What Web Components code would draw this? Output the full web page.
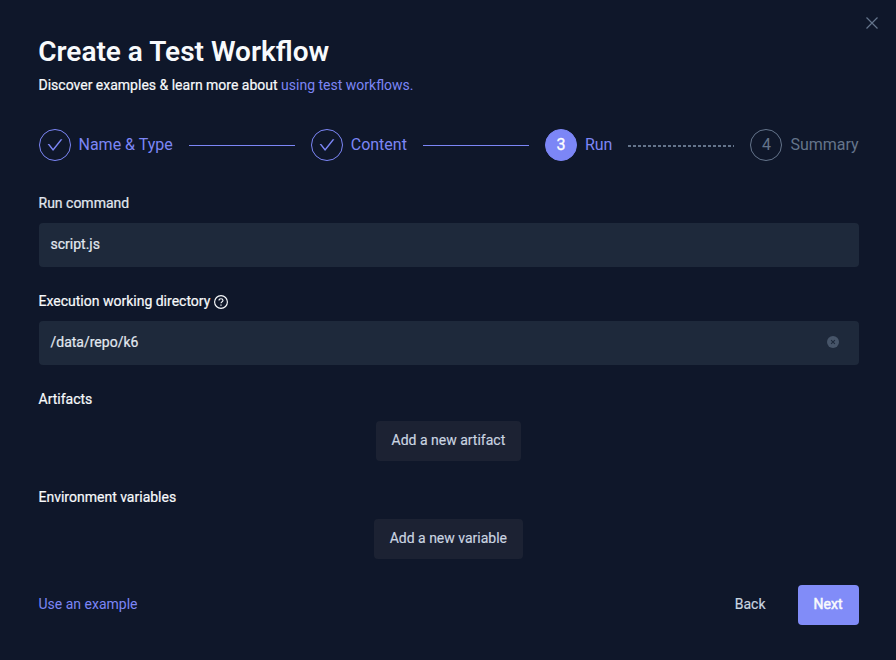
<!DOCTYPE html>
<html lang="en">
<head>
<meta charset="utf-8">
<title>Create a Test Workflow</title>
<style>
html,body{margin:0;height:100%;background:#0f172a;overflow:hidden}
body{font-family:Roboto,sans-serif;font-size:14px;line-height:22px;color:#f8fafc}
</style>
</head>
<body>
<workflow-dialog></workflow-dialog>
<script>
const define = (name, html, setup) => customElements.define(name, class extends HTMLElement {
  connectedCallback() {
    if (this.shadowRoot) return;
    const t = document.createElement('template');
    t.innerHTML = html;
    this.attachShadow({mode: 'open'}).append(t.content.cloneNode(true));
    if (setup) setup(this, this.shadowRoot);
  }
});

define('wizard-step', `
<style>
:host{display:flex;align-items:center;flex:none;font-size:16px;line-height:32px;color:#7c86f6}
.dot{box-sizing:border-box;width:32px;height:32px;border:1px solid #7c86f6;border-radius:50%;display:flex;align-items:center;justify-content:center;margin-right:8px;flex:none}
.dot svg{display:block;width:16px;height:16px;fill:#7c86f6}
:host([state=active]) .dot{background:#7c86f6;color:#fff;-webkit-text-stroke:.3px currentColor}
:host([state=wait]){color:#64748b}
:host([state=wait]) .dot{border-color:#64748b;padding-left:1px}
:host([state=wait]) .title{padding-left:.5px}
.title{white-space:nowrap}
.tail{width:106px;flex:none;height:1px;background:#7c86f6;margin:0 16px}
:host([state=active]) .tail{height:2px;margin:1px 15.5px 0 16px;background:repeating-linear-gradient(90deg,#64748b 0 3px,transparent 3px 5px)}
:host([last]) .tail{display:none}
</style>
<div class="dot"></div><div class="title"><slot></slot></div><div class="tail"></div>`, (el, root) => {
  root.querySelector('.dot').innerHTML = el.getAttribute('state') === 'done'
    ? '<svg viewBox="64 64 896 896"><path d="M912 190h-69.9c-9.8 0-19.1 4.5-25.1 12.2L404.7 724.5 207 474a32 32 0 00-25.1-12.2H112c-6.7 0-10.4 7.7-6.3 12.9l273.9 347c12.8 16.2 37.4 16.2 50.3 0l488.4-618.9c4.1-5.1.4-12.8-6.3-12.8z"/></svg>'
    : el.getAttribute('number');
});

define('form-field', `
<style>
:host{display:block;height:98px}
.label{display:flex;align-items:center;height:22px;margin-bottom:9px;-webkit-text-stroke:.2px currentColor;font-size:14px}
:host([muted]) .label{color:#e2e8f0}
:host([action]) .label{margin-bottom:11px}
</style>
<div class="label"><slot name="label"></slot></div><slot></slot>`);

define('help-icon', `
<style>:host{display:block;margin:2px 0 0 4px}svg{display:block;width:14px;height:14px;fill:none;stroke:currentColor}</style>
<svg viewBox="0 0 14 14"><circle cx="7" cy="7" r="6.4" stroke-width="1.15"/><path d="M5 5.55C5 4.4 5.9 3.7 7 3.7s2 .75 2 1.8C9 6.7 7 6.8 7 8.3" stroke-width="1.1"/><path d="M7 9.5v1.2" stroke-width="1.2"/></svg>`);

define('text-box', `
<style>
:host{box-sizing:border-box;display:flex;align-items:center;justify-content:space-between;height:44px;padding:0 20px 2px 12px;border-radius:4px;background:#1e293b;color:#e2e8f0;-webkit-text-stroke:.2px currentColor}
svg{display:none;width:12px;height:12px}
:host([clearable]) svg{display:block}
</style>
<slot></slot><svg viewBox="0 0 12 12"><circle cx="6" cy="6" r="6" fill="#475569"/><path d="M4.1 4.1 7.9 7.9M7.9 4.1 4.1 7.9" stroke="#1e293b" stroke-width="1.1"/></svg>`);

define('push-button', `
<style>
:host{box-sizing:border-box;display:flex;align-items:center;justify-content:center;height:40px;padding:0 16px 2px;border-radius:4px;width:max-content;-webkit-text-stroke:.15px currentColor;color:#cbd5e1}
:host([kind=secondary]){background:#1c2233;margin:0 auto;position:relative;left:-.4px}
:host([kind=primary]){background:#818cf8;color:#f8fafc;-webkit-text-stroke:.5px currentColor;width:61px;padding-right:17px}
</style><slot></slot>`);

define('workflow-dialog', `
<style>
:host{box-sizing:border-box;display:block;position:relative;height:660px;padding:34px 37px 0 38.5px}
h1{margin:0 0 0 -.3px;font-size:28px;line-height:36px;font-weight:600}
p{margin:4px 0 0;line-height:22px;-webkit-text-stroke:.2px currentColor}
a{color:#7c86f6;-webkit-text-stroke:0}
.close{position:absolute;left:866px;top:17px;width:12px;height:12px;stroke:#64748b;stroke-width:1.2}
.steps{display:flex;margin-top:33px;height:32px}
.form{margin-top:31px}
footer{display:flex;align-items:center;height:40px;margin-top:1px}
footer a{padding-bottom:2px;margin-right:auto}
footer push-button+push-button{margin-left:16.5px}
</style>
<svg class="close" viewBox="0 0 12 12"><path d="M.5.5 11.5 11.5M11.5.5.5 11.5"/></svg>
<h1>Create a Test Workflow</h1>
<p>Discover examples &amp; learn more about <a>using test workflows.</a></p>
<div class="steps">
<wizard-step state="done">Name &amp; Type</wizard-step>
<wizard-step state="done">Content</wizard-step>
<wizard-step state="active" number="3">Run</wizard-step>
<wizard-step state="wait" number="4" last>Summary</wizard-step>
</div>
<div class="form">
<form-field muted><span slot="label">Run command</span><text-box>script.js</text-box></form-field>
<form-field><span slot="label">Execution working directory</span><help-icon slot="label"></help-icon><text-box clearable>/data/repo/k6</text-box></form-field>
<form-field action><span slot="label">Artifacts</span><push-button kind="secondary">Add a new artifact</push-button></form-field>
<form-field action><span slot="label">Environment variables</span><push-button kind="secondary">Add a new variable</push-button></form-field>
</div>
<footer><a>Use an example</a><push-button>Back</push-button><push-button kind="primary">Next</push-button></footer>`);
</script>
</body>
</html>
